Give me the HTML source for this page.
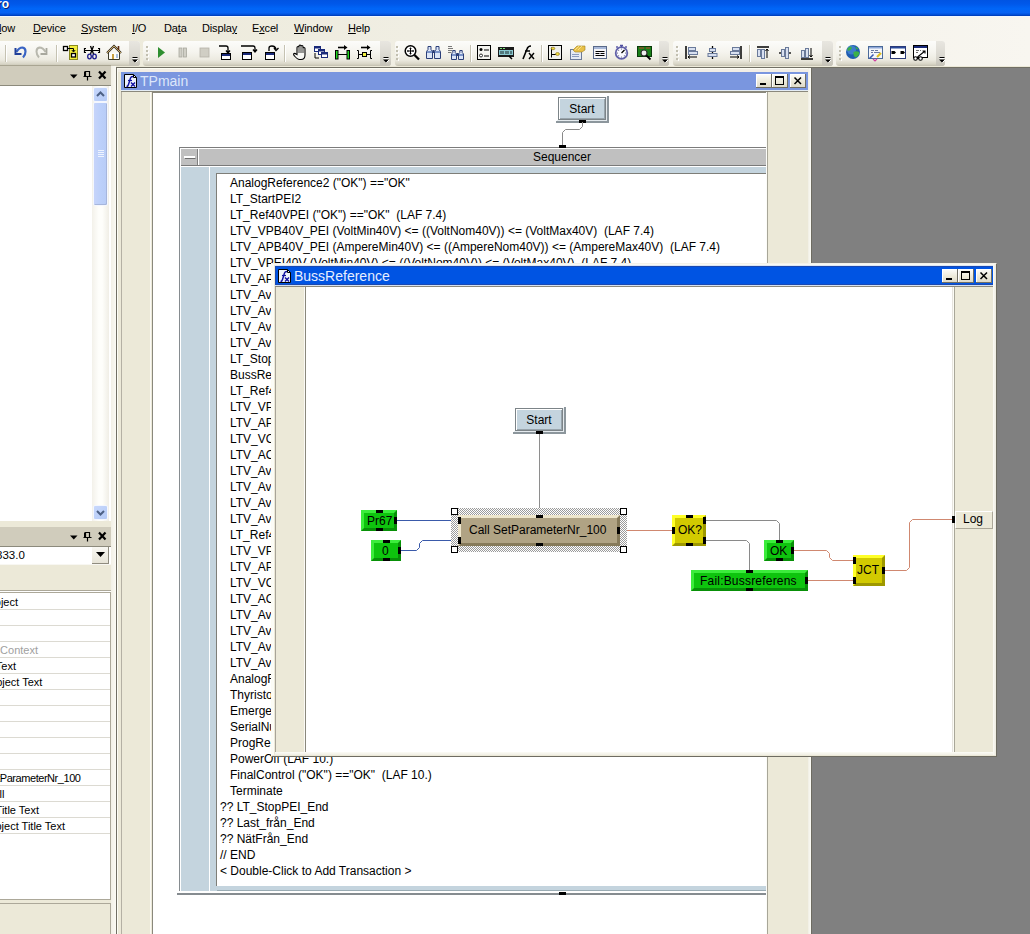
<!DOCTYPE html>
<html><head><meta charset="utf-8">
<style>
*{margin:0;padding:0;box-sizing:border-box}
html,body{width:1030px;height:934px;overflow:hidden;background:#ECE9D8;font-family:"Liberation Sans",sans-serif;color:#000}
.a{position:absolute}
.t{position:absolute;white-space:nowrap;font-size:12px;line-height:14px}
u{text-decoration:underline;text-decoration-thickness:1px;text-underline-offset:0.5px}
.tb{position:absolute;top:41px;height:25px;border-radius:3px;background:linear-gradient(#FCFCFA 0%,#F5F4EE 45%,#ECEAE0 75%,#D8D5C6 92%,#C2BEAE 100%)}
.chev{position:absolute;top:41px;height:25px;width:12px;border-radius:0 3px 3px 0;background:linear-gradient(#E8E6E0,#DAD8D0 60%,#C4C1B6)}
.grip{position:absolute;top:46px;width:2px;height:14px;background:repeating-linear-gradient(#C1BEB0 0 2px,transparent 2px 4px)}
.sep{position:absolute;top:45px;width:2px;height:17px;border-left:1px solid #C5C2B2;border-right:1px solid #fff}
.ic{position:absolute;top:45px;width:16px;height:16px}
.pin{position:absolute;background:#000}
.wb{position:absolute;width:16px;height:14px;border-radius:2px;background:linear-gradient(#FFFFFF,#ECE9D8 60%,#D8D4C4);box-shadow:inset -1px -1px 0 #8F8C7F, inset 1px 1px 0 #fff}
</style></head><body>

<div class="a" style="left:0px;top:0px;width:1030px;height:16px;background:linear-gradient(#0054E3 0%,#0058EA 25%,#0066F8 55%,#0862F2 80%,#004ED6 92%,#0038B0 100%)"></div>
<div class="a" style="left:0px;top:17px;width:1030px;height:49px;background:linear-gradient(90deg,#ECE9D8 0%,#F0EEE3 40%,#F2F0E6 60%,#F8F6F0 100%)"></div>
<div class="t" style="left:-11px;top:-3px;font-weight:bold;font-size:12px;line-height:14px;color:#fff;text-shadow:1px 1px 0 #0A2470">Pro</div>
<div class="a" style="left:0px;top:16px;width:1030px;height:1px;background:#F2F8FF"></div>
<div class="t" style="left:-1px;top:22px;font-size:11px;line-height:13px;letter-spacing:-0.15px"><u>l</u>ow</div>
<div class="t" style="left:33px;top:22px;font-size:11px;line-height:13px;letter-spacing:-0.15px"><u>D</u>evice</div>
<div class="t" style="left:81px;top:22px;font-size:11px;line-height:13px;letter-spacing:-0.15px"><u>S</u>ystem</div>
<div class="t" style="left:132px;top:22px;font-size:11px;line-height:13px;letter-spacing:-0.15px"><u>I</u>/O</div>
<div class="t" style="left:164px;top:22px;font-size:11px;line-height:13px;letter-spacing:-0.15px">Da<u>t</u>a</div>
<div class="t" style="left:202px;top:22px;font-size:11px;line-height:13px;letter-spacing:-0.15px">Displa<u>y</u></div>
<div class="t" style="left:252px;top:22px;font-size:11px;line-height:13px;letter-spacing:-0.15px">E<u>x</u>cel</div>
<div class="t" style="left:294px;top:22px;font-size:11px;line-height:13px;letter-spacing:-0.15px"><u>W</u>indow</div>
<div class="t" style="left:348px;top:22px;font-size:11px;line-height:13px;letter-spacing:-0.15px"><u>H</u>elp</div>
<div class="tb" style="left:-4px;width:144px"></div>
<div class="chev" style="left:129px;width:11px"></div>
<svg class="a" style="left:131px;top:56px" width="8" height="8"><path d="M1.5 2.5H6.5" stroke="#fff" stroke-width="1"/><path d="M1.5 1.5H6.5" stroke="#000" stroke-width="1"/><path d="M1 3.5H7L4 6.5Z" fill="#000"/><path d="M4.5 6.5L7 4" stroke="#fff" stroke-width="1"/></svg>
<div class="tb" style="left:143px;width:248px"></div>
<div class="chev" style="left:380px;width:11px"></div>
<svg class="a" style="left:382px;top:56px" width="8" height="8"><path d="M1.5 2.5H6.5" stroke="#fff" stroke-width="1"/><path d="M1.5 1.5H6.5" stroke="#000" stroke-width="1"/><path d="M1 3.5H7L4 6.5Z" fill="#000"/><path d="M4.5 6.5L7 4" stroke="#fff" stroke-width="1"/></svg>
<div class="tb" style="left:395px;width:274px"></div>
<div class="chev" style="left:659px;width:10px"></div>
<svg class="a" style="left:661px;top:56px" width="8" height="8"><path d="M1.5 2.5H6.5" stroke="#fff" stroke-width="1"/><path d="M1.5 1.5H6.5" stroke="#000" stroke-width="1"/><path d="M1 3.5H7L4 6.5Z" fill="#000"/><path d="M4.5 6.5L7 4" stroke="#fff" stroke-width="1"/></svg>
<div class="tb" style="left:673px;width:160px"></div>
<div class="chev" style="left:822px;width:11px"></div>
<svg class="a" style="left:824px;top:56px" width="8" height="8"><path d="M1.5 2.5H6.5" stroke="#fff" stroke-width="1"/><path d="M1.5 1.5H6.5" stroke="#000" stroke-width="1"/><path d="M1 3.5H7L4 6.5Z" fill="#000"/><path d="M4.5 6.5L7 4" stroke="#fff" stroke-width="1"/></svg>
<div class="tb" style="left:836px;width:109px"></div>
<div class="chev" style="left:936px;width:9px"></div>
<svg class="a" style="left:938px;top:56px" width="8" height="8"><path d="M1.5 2.5H6.5" stroke="#fff" stroke-width="1"/><path d="M1.5 1.5H6.5" stroke="#000" stroke-width="1"/><path d="M1 3.5H7L4 6.5Z" fill="#000"/><path d="M4.5 6.5L7 4" stroke="#fff" stroke-width="1"/></svg>
<svg class="a" style="left:146px;top:45px" width="4" height="17"><g fill="#C2BFB0"><rect x="0" y="1" width="2" height="2"/><rect x="0" y="5" width="2" height="2"/><rect x="0" y="9" width="2" height="2"/><rect x="0" y="13" width="2" height="2"/></g><g fill="#fff"><rect x="2" y="2" width="1" height="2"/><rect x="2" y="6" width="1" height="2"/><rect x="2" y="10" width="1" height="2"/><rect x="2" y="14" width="1" height="2"/></g></svg>
<svg class="a" style="left:396px;top:45px" width="4" height="17"><g fill="#C2BFB0"><rect x="0" y="1" width="2" height="2"/><rect x="0" y="5" width="2" height="2"/><rect x="0" y="9" width="2" height="2"/><rect x="0" y="13" width="2" height="2"/></g><g fill="#fff"><rect x="2" y="2" width="1" height="2"/><rect x="2" y="6" width="1" height="2"/><rect x="2" y="10" width="1" height="2"/><rect x="2" y="14" width="1" height="2"/></g></svg>
<svg class="a" style="left:676px;top:45px" width="4" height="17"><g fill="#C2BFB0"><rect x="0" y="1" width="2" height="2"/><rect x="0" y="5" width="2" height="2"/><rect x="0" y="9" width="2" height="2"/><rect x="0" y="13" width="2" height="2"/></g><g fill="#fff"><rect x="2" y="2" width="1" height="2"/><rect x="2" y="6" width="1" height="2"/><rect x="2" y="10" width="1" height="2"/><rect x="2" y="14" width="1" height="2"/></g></svg>
<svg class="a" style="left:839px;top:45px" width="4" height="17"><g fill="#C2BFB0"><rect x="0" y="1" width="2" height="2"/><rect x="0" y="5" width="2" height="2"/><rect x="0" y="9" width="2" height="2"/><rect x="0" y="13" width="2" height="2"/></g><g fill="#fff"><rect x="2" y="2" width="1" height="2"/><rect x="2" y="6" width="1" height="2"/><rect x="2" y="10" width="1" height="2"/><rect x="2" y="14" width="1" height="2"/></g></svg>
<div class="sep" style="left:5px"></div>
<div class="sep" style="left:56px"></div>
<div class="sep" style="left:284px"></div>
<div class="sep" style="left:470px"></div>
<div class="sep" style="left:541px"></div>
<div class="sep" style="left:749px"></div>
<svg class="a" style="left:0;top:41px" width="1030" height="25">
<g transform="translate(0,-41)">
<!-- undo -->
<path d="M16.5 52Q19 47.5 22.5 47.5Q25.5 48 25.5 51.5Q25.5 55 23 57.5" fill="none" stroke="#3A64C4" stroke-width="2.2"/>
<path d="M15.5 48V54H21.5" fill="none" stroke="#22409A" stroke-width="2"/>
<!-- redo gray -->
<path d="M45.5 52Q43 47.5 39.5 47.5Q36.5 48 36.5 51.5Q36.5 55 39 57.5" fill="none" stroke="#B8B8AE" stroke-width="2"/>
<path d="M46.5 48V54H40.5" fill="none" stroke="#A8A89E" stroke-width="1.8"/>
<!-- icon3 yellow -->
<rect x="69.5" y="45.5" width="8" height="14" fill="#F2EE3C" stroke="#8A8A20"/>
<rect x="63.5" y="46.5" width="4" height="4" fill="#fff" stroke="#000" stroke-width="1.3"/>
<rect x="71.5" y="53.5" width="4" height="3.5" fill="#fff" stroke="#000" stroke-width="1.3"/>
<path d="M68 48.5H73.5V51.5M71.8 50L73.5 52L75.2 50" fill="none" stroke="#000"/>
<!-- icon4 scissors-->
<path d="M85 50.5H99M84.5 48V53M99.5 48V53M84 48.5H86M84 52.5H86M98 48.5H100M98 52.5H100" fill="none" stroke="#000" stroke-width="1.2"/>
<path d="M90.5 46L93.5 54M93.5 46L90.5 54" fill="none" stroke="#000" stroke-width="1.3"/>
<ellipse cx="89.5" cy="56.5" rx="1.8" ry="2.3" fill="none" stroke="#1A1A8A" stroke-width="1.3"/><ellipse cx="94.5" cy="56.5" rx="1.8" ry="2.3" fill="none" stroke="#1A1A8A" stroke-width="1.3"/>
<!-- home -->
<path d="M108.5 52.5V59.5H119.5V52.5" fill="#FDFDF8" stroke="#3A3A2A"/>
<path d="M107 53L114 46L121 53" fill="none" stroke="#3A3020" stroke-width="2.2"/>
<path d="M107 53L114 46L121 53" fill="none" stroke="#D8B870" stroke-width="0.9"/>
<rect x="112" y="54" width="2" height="5" fill="#C8A040"/><rect x="116" y="54" width="2" height="4" fill="#A8C0E0"/>
<path d="M118.5 46V50" stroke="#5A2A10" stroke-width="1.6"/>
<!-- play -->
<path d="M158 47V58L165 52.5Z" fill="#2E8E30"/>
<!-- pause -->
<rect x="179" y="48" width="3" height="9" fill="#D0CFC6" stroke="#A9A89E" stroke-width=".8"/><rect x="183.5" y="48" width="3" height="9" fill="#D0CFC6" stroke="#A9A89E" stroke-width=".8"/>
<!-- stop -->
<rect x="200" y="48" width="9" height="9" fill="#D0CEC4" stroke="#B4B2A8" stroke-width=".8"/>
<!-- step into -->
<path d="M219 46H226Q228 46 228 48V52M226 50.5L228 53L230 50.5" fill="none" stroke="#000" stroke-width="1.3"/>
<rect x="221.5" y="53.5" width="9" height="6" fill="#fff" stroke="#000"/><rect x="222" y="54" width="8" height="2" fill="#1A2A7A"/>
<!-- step over -->
<path d="M241 46H253Q255 46 255 48V51M253 49.5L255 52L257 49.5" fill="none" stroke="#000" stroke-width="1.3"/>
<rect x="242.5" y="52.5" width="9" height="7" fill="#fff" stroke="#000"/><rect x="243" y="53" width="8" height="2" fill="#1A2A7A"/>
<!-- step out -->
<path d="M269 51V48Q269 46 272 46Q275 46 276 49M274 48L276 50.5L278.5 48" fill="none" stroke="#000" stroke-width="1.3"/>
<rect x="265.5" y="52.5" width="9" height="7" fill="#fff" stroke="#000"/><rect x="266" y="53" width="8" height="2" fill="#1A2A7A"/>
<!-- hand -->
<path d="M297 54.5V47.5Q297 46.5 298 46.5Q299 46.5 299 47.5V46Q299 45 300 45Q301 45 301 46V46.5Q301 45.5 302 45.5Q303 45.5 303 46.5V48.5Q303 47.5 304 47.5Q305 47.5 305 48.5V55Q305 59.5 301 59.5H299.5Q297.5 59.5 294.5 56Q293 54.5 294 53.5Q295 53 296 54Z" fill="#F8F8F4" stroke="#000" stroke-width="1.1"/>
<path d="M299 47.5V53M301 46.5V53M303 48.5V53" stroke="#000" stroke-width=".8"/>
<!-- windows -->
<rect x="314.5" y="46.5" width="6" height="5" fill="#fff" stroke="#1A2A7A"/><rect x="318.5" y="49.5" width="6" height="5" fill="#fff" stroke="#1A2A7A"/><rect x="321.5" y="52.5" width="6" height="5" fill="#fff" stroke="#1A2A7A"/>
<rect x="315" y="47" width="5" height="1.5" fill="#1A2A7A"/><rect x="319" y="50" width="5" height="1.5" fill="#1A2A7A"/><rect x="322" y="53" width="5" height="1.5" fill="#1A2A7A"/>
<path d="M315 53V58H319" fill="none" stroke="#000" stroke-width="1"/>
<!-- green brackets -->
<path d="M338 47.5H344.5" stroke="#000" stroke-width="1.6"/><path d="M344 45L347.5 47.5L344 50Z" fill="#000"/>
<rect x="335.5" y="50.5" width="2.5" height="8.5" fill="#20D820" stroke="#000"/><rect x="347" y="50.5" width="2.5" height="8.5" fill="#20D820" stroke="#000"/><path d="M338 54.5H347" stroke="#000"/>
<!-- yellow node -->
<path d="M361 47.5H367.5" stroke="#000" stroke-width="1.6"/><path d="M367 45L370.5 47.5L367 50Z" fill="#000"/>
<path d="M357 50.5H358.5V58.5H357M372 50.5H370.5V58.5H372M358.5 54.5H370.5" fill="none" stroke="#000"/>
<rect x="362.5" y="52.5" width="4" height="4" fill="#F0F040" stroke="#000"/>
<!-- zoom -->
<circle cx="410.5" cy="51" r="5.3" fill="#fff" stroke="#000" stroke-width="1.5"/>
<path d="M414.5 55L419 59.5" stroke="#000" stroke-width="2.3"/>
<path d="M410.5 47.5V54.5M407 51H414" stroke="#000" stroke-width="1"/>
<path d="M409.5 48.5H411.5M409.5 53.5H411.5M408 50V52M413 50V52" stroke="#000" stroke-width=".8"/>
<!-- binoculars -->
<path d="M426.5 58.5V51.5L428 49.5V46.5H431V49.5L432.5 51.5V58.5ZM434.5 58.5V51.5L436 49.5V46.5H439V49.5L440.5 51.5V58.5Z" fill="#DCE6F8" stroke="#2A3E78" stroke-width="1"/>
<path d="M427 52H432M435 52H440" stroke="#5A78B8" stroke-width="1.6"/>
<rect x="432.5" y="50" width="2" height="3" fill="#2A3E78"/>
<!-- find next -->
<path d="M448 46.5H452M448 48.5H453M448 50.5H452.5M448 52.5H451.5" stroke="#7A7A7A" stroke-width="1"/>
<path d="M451.5 59.5V54L452.8 52.5V50.5H455.2V52.5L456.5 54V59.5ZM458.5 59.5V54L459.8 52.5V50.5H462.2V52.5L463.5 54V59.5Z" fill="#DCE6F8" stroke="#2A3E78" stroke-width="1"/>
<path d="M452 55H456M459 55H463" stroke="#5A78B8" stroke-width="1.4"/>
<rect x="456.5" y="53" width="2" height="3" fill="#2A3E78"/>
<!-- list -->
<rect x="477.5" y="45.5" width="13" height="14" fill="#F4F4F0" stroke="#000"/>
<circle cx="481" cy="49.5" r="1.5" fill="#000"/><circle cx="481" cy="55.5" r="1.5" fill="#fff" stroke="#000" stroke-width=".8"/>
<path d="M484 50H489M484 56H489" stroke="#000"/>
<!-- display -->
<rect x="498" y="47" width="16" height="10" fill="#1A1A1A"/><rect x="499" y="50" width="14" height="5" fill="#8AC8D0"/>
<path d="M500 48.5H502M503 48.5H505" stroke="#7CE07C"/>
<path d="M501 51V54M503 51V54M506 51V54M508 51V54M511 51V54" stroke="#000" stroke-width=".8"/>
<path d="M509 56L512 59" stroke="#000" stroke-width="1.5"/>
<!-- fx -->
<path d="M523 59L527 49Q528 46 531 46M525 51H530" fill="none" stroke="#000" stroke-width="1.6"/>
<path d="M529 53L534 59M534 53L529 59" stroke="#000" stroke-width="1.4"/>
<!-- flag -->
<rect x="548.5" y="45.5" width="13" height="14" fill="#F0F0EC" stroke="#000"/>
<path d="M551.5 47.5V57.5M551.5 54.5H556" stroke="#000" stroke-width="1"/>
<ellipse cx="553" cy="48.5" rx="1.8" ry="1.3" fill="#F0E040" stroke="#806010" stroke-width=".6"/>
<ellipse cx="557.5" cy="54" rx="2" ry="1.4" fill="#F0E040" stroke="#806010" stroke-width=".6"/>
<!-- notes -->
<rect x="570.5" y="49.5" width="11" height="10" fill="#E4EAF4" stroke="#6A7A9A"/>
<path d="M572 54.5H579M572 56.5H579" stroke="#8A9CC0" stroke-width="1"/>
<path d="M573 50L577 46H585V50L582 52H575Z" fill="#E8C048" stroke="#A08020" stroke-width=".6"/>
<path d="M575 50L579 46M578 50L582 46" stroke="#F8E8A0" stroke-width=".8"/>
<!-- form -->
<rect x="593.5" y="46.5" width="13" height="12" fill="#F4F4F8" stroke="#5A6A8A"/><rect x="594" y="47" width="12" height="2" fill="#A8B8D8"/>
<path d="M595.5 51.5H604.5M595.5 53.5H599.5M600.5 53.5H604.5M595.5 55.5H604.5" stroke="#000" stroke-width="1"/>
<!-- stopwatch -->
<circle cx="621.5" cy="53" r="5.8" fill="#FAFAFF" stroke="#6060A8" stroke-width="1.8"/>
<path d="M620 45.5H623M621.5 45.5V47" stroke="#5050A0" stroke-width="1.4"/>
<circle cx="617" cy="47" r="1" fill="#6060A8"/><circle cx="626" cy="47" r="1" fill="#6060A8"/>
<path d="M621.5 53L624.5 50" stroke="#000" stroke-width="1.2"/>
<g fill="#404060"><circle cx="621.5" cy="49" r=".5"/><circle cx="621.5" cy="57" r=".5"/><circle cx="617.5" cy="53" r=".5"/><circle cx="625.5" cy="53" r=".5"/><circle cx="618.7" cy="50.2" r=".5"/><circle cx="618.7" cy="55.8" r=".5"/><circle cx="624.3" cy="55.8" r=".5"/></g>
<!-- green magnifier -->
<rect x="637.5" y="46.5" width="14" height="10" fill="#188018" stroke="#0A3A0A"/>
<path d="M639 48H644M646 48H650" stroke="#C04030" stroke-width="1"/>
<circle cx="644" cy="53" r="3" fill="#F0F0F0" stroke="#303030" stroke-width="1.2"/>
<path d="M646.3 55.3L650.5 59.5" stroke="#000" stroke-width="1.8"/>
<!-- align left -->
<path d="M686 46V59" stroke="#000" stroke-width="1.5"/>
<rect x="688.5" y="47.5" width="7" height="3" fill="#D8E0F0" stroke="#6A7A9A"/><rect x="688.5" y="51.5" width="9" height="3" fill="#D8E0F0" stroke="#6A7A9A"/>
<path d="M688 57H697M690 55.5L688 57L690 58.5" fill="none" stroke="#000"/>
<!-- align center -->
<path d="M712.5 46V59" stroke="#000" stroke-width="1.3"/>
<rect x="709.5" y="48.5" width="6" height="3" fill="#D8E0F0" stroke="#6A7A9A"/><rect x="708" y="53.5" width="9" height="3" fill="#D8E0F0" stroke="#6A7A9A"/>
<!-- align right -->
<path d="M741 46V59" stroke="#000" stroke-width="1.5"/>
<rect x="732.5" y="47.5" width="7" height="3" fill="#D8E0F0" stroke="#6A7A9A"/><rect x="730.5" y="51.5" width="9" height="3" fill="#D8E0F0" stroke="#6A7A9A"/>
<path d="M730 57H739M737 55.5L739 57L737 58.5" fill="none" stroke="#000"/>
<!-- align top -->
<path d="M757 47H769" stroke="#000" stroke-width="1.5"/>
<rect x="757.5" y="49.5" width="3" height="7" fill="#D8E0F0" stroke="#6A7A9A"/><rect x="761.5" y="49.5" width="3" height="9" fill="#D8E0F0" stroke="#6A7A9A"/>
<path d="M767 58V49M765.5 51L767 49L768.5 51" fill="none" stroke="#000"/>
<!-- align middle -->
<path d="M779 53H791" stroke="#000" stroke-width="1.3"/>
<rect x="781.5" y="49.5" width="3" height="7" fill="#D8E0F0" stroke="#6A7A9A"/><rect x="785.5" y="47.5" width="3" height="11" fill="#D8E0F0" stroke="#6A7A9A"/>
<!-- align bottom -->
<path d="M801 59H813" stroke="#000" stroke-width="1.5"/>
<rect x="801.5" y="50.5" width="3" height="7" fill="#D8E0F0" stroke="#6A7A9A"/><rect x="805.5" y="48.5" width="3" height="9" fill="#D8E0F0" stroke="#6A7A9A"/>
<path d="M811 48V57M809.5 55L811 57L812.5 55" fill="none" stroke="#000"/>
<!-- globe -->
<circle cx="853" cy="52" r="7" fill="#1E5CB0"/>
<circle cx="851.5" cy="50" r="4.5" fill="#4A8AD8" opacity=".7"/>
<path d="M847.5 48.5Q849 46.5 851.5 46.5Q852.5 48.5 850.5 50Q849 51 847.5 50.5Z" fill="#3CB048"/>
<path d="M853.5 52Q857 50.5 859.5 52.5Q859 56 855.5 57.5Q853 56 853.5 52Z" fill="#3CB048"/>
<path d="M855 46.5Q857.5 47 858.5 49L856.5 49.5Z" fill="#3CB048"/>
<!-- icon form pen -->
<rect x="868.5" y="46.5" width="14" height="12" fill="#F4F6FA" stroke="#4A6A9A"/><rect x="869" y="47" width="13" height="1.5" fill="#90A8D8"/>
<path d="M871 50.5H874M875 50.5H878M871 52.5H873M874 52.5H880" stroke="#6A7AA0" stroke-width="1"/>
<path d="M869.5 58.5L873.5 54.5" stroke="#3A5AB0" stroke-width="1.6"/>
<path d="M873 59L875 61L877 59" fill="none" stroke="#D040A0" stroke-width="1.2"/>
<path d="M877 57L881 53" stroke="#E0C020" stroke-width="2.2"/>
<!-- icon connector -->
<rect x="890.5" y="46.5" width="15" height="12" fill="#fff" stroke="#2A3A7A"/><rect x="891" y="47" width="14" height="1.5" fill="#2A4A9A"/>
<path d="M891.5 51H894.5L896 52.5L894.5 54H891.5Z" fill="#000"/><path d="M900.5 51H903.5L905 52.5L903.5 54H900.5Z" fill="#000"/>
<!-- icon chart -->
<rect x="913.5" y="45.5" width="14" height="12" fill="#fff" stroke="#000"/><rect x="914" y="46" width="13" height="2" fill="#1A2A7A"/>
<path d="M916 50.5H919M920 50.5H921M916 52.5H918" stroke="#5A5A5A" stroke-width=".9"/>
<path d="M917.5 57L925 51M922.5 51H925V53.5" fill="none" stroke="#000" stroke-width="1.1"/>
<circle cx="915.5" cy="58.5" r="1.8" fill="#fff" stroke="#000" stroke-width="1.1"/><circle cx="920.5" cy="58.5" r="1.8" fill="#fff" stroke="#000" stroke-width="1.1"/><path d="M917 58.5H919" stroke="#000"/>
</g></svg>
<div class="a" style="left:0px;top:65px;width:111px;height:1px;background:#A9A592"></div>
<div class="a" style="left:0px;top:66px;width:111px;height:19px;background:#D0CCBC"></div>
<div class="a" style="left:0px;top:85px;width:111px;height:1px;background:#8C8A7C"></div>
<div class="a" style="left:0px;top:86px;width:111px;height:435px;background:#fff"></div>
<div class="a" style="left:92px;top:86px;width:17px;height:435px;background:linear-gradient(90deg,#F3F1EA,#FEFEFB 40%,#FEFEFB 60%,#F0EEE6)"></div>
<div class="a" style="left:93px;top:87px;width:15px;height:15px;border-radius:2px;background:linear-gradient(135deg,#C8D8FC,#B4CAF6);border:1px solid #F4F7FE;box-shadow:0 0 0 0 #000"></div>
<div class="a" style="left:93px;top:102px;width:15px;height:104px;border-radius:2px;background:linear-gradient(90deg,#C6D4FA,#BCD0FA 50%,#B8CCF6);border:1px solid #F4F7FE;box-shadow:inset -1px -1px 0 #A6B6DC"></div>
<div class="a" style="left:93px;top:505px;width:15px;height:15px;border-radius:2px;background:linear-gradient(135deg,#C8D8FC,#B4CAF6);border:1px solid #F4F7FE"></div>
<svg class="a" style="left:93px;top:87px" width="15" height="15"><path d="M4 9 L7.5 5.5 L11 9" stroke="#4D6185" stroke-width="2" fill="none"/></svg>
<svg class="a" style="left:93px;top:505px" width="15" height="15"><path d="M4 6 L7.5 9.5 L11 6" stroke="#4D6185" stroke-width="2" fill="none"/></svg>
<svg class="a" style="left:98px;top:150px" width="6" height="8"><path d="M0 .5H6M0 2.5H6M0 4.5H6M0 6.5H6" stroke="#EEF3FE" stroke-width="1"/></svg>
<div class="a" style="left:0px;top:521px;width:111px;height:6px;background:#ECE9D8"></div>
<div class="a" style="left:0px;top:527px;width:111px;height:19px;background:#D0CCBC"></div>
<div class="a" style="left:0px;top:546px;width:111px;height:1px;background:#8C8A7C"></div>
<div class="a" style="left:0px;top:547px;width:111px;height:17px;background:#fff"></div>
<div class="a" style="left:92px;top:547px;width:17px;height:17px;background:linear-gradient(#F8F7F2,#E6E3D6);box-shadow:inset -1px -1px 0 #8F8C7F"></div>
<svg class="a" style="left:96px;top:552px" width="9" height="6"><path d="M0 0H9L4.5 5Z" fill="#000"/></svg>
<div class="a" style="left:0px;top:564px;width:111px;height:1px;background:#F8F7F2"></div>
<div class="t" style="left:-4px;top:549px;font-size:11.5px;line-height:13px">333.0</div>
<svg class="a" style="left:68px;top:66px" width="42" height="19"><path d="M2 8.5H9.5L5.75 12.5Z" fill="#000"/><path d="M17 5.5H22M17.5 5V11M21.5 5V11M15.5 10.5H23.5M19.5 10.5V14.5" stroke="#000" stroke-width="1.2" fill="none"/><path d="M16.5 5.5V10.5" stroke="#000" stroke-width="1"/><path d="M31 5.5L37.5 12.5M37.5 5.5L31 12.5" stroke="#000" stroke-width="2.2"/></svg>
<svg class="a" style="left:68px;top:527px" width="42" height="19"><path d="M2 8.5H9.5L5.75 12.5Z" fill="#000"/><path d="M17 5.5H22M17.5 5V11M21.5 5V11M15.5 10.5H23.5M19.5 10.5V14.5" stroke="#000" stroke-width="1.2" fill="none"/><path d="M16.5 5.5V10.5" stroke="#000" stroke-width="1"/><path d="M31 5.5L37.5 12.5M37.5 5.5L31 12.5" stroke="#000" stroke-width="2.2"/></svg>
<div class="a" style="left:0px;top:590px;width:111px;height:1px;background:#ACA899"></div>
<div class="a" style="left:0px;top:591px;width:111px;height:1px;background:#FFFFFF"></div>
<div class="a" style="left:0px;top:592px;width:111px;height:308px;background:#fff;border-top:1px solid #ACA899;border-right:1px solid #ACA899;border-bottom:1px solid #ACA899"></div>
<div class="a" style="left:0px;top:609px;width:110px;height:1px;background:#DCDAD2"></div>
<div class="a" style="left:0px;top:625px;width:110px;height:1px;background:#DCDAD2"></div>
<div class="a" style="left:0px;top:641px;width:110px;height:1px;background:#DCDAD2"></div>
<div class="a" style="left:0px;top:657px;width:110px;height:1px;background:#DCDAD2"></div>
<div class="a" style="left:0px;top:673px;width:110px;height:1px;background:#DCDAD2"></div>
<div class="a" style="left:0px;top:689px;width:110px;height:1px;background:#DCDAD2"></div>
<div class="a" style="left:0px;top:705px;width:110px;height:1px;background:#DCDAD2"></div>
<div class="a" style="left:0px;top:721px;width:110px;height:1px;background:#DCDAD2"></div>
<div class="a" style="left:0px;top:737px;width:110px;height:1px;background:#DCDAD2"></div>
<div class="a" style="left:0px;top:753px;width:110px;height:1px;background:#DCDAD2"></div>
<div class="a" style="left:0px;top:769px;width:110px;height:1px;background:#DCDAD2"></div>
<div class="a" style="left:0px;top:785px;width:110px;height:1px;background:#DCDAD2"></div>
<div class="a" style="left:0px;top:801px;width:110px;height:1px;background:#DCDAD2"></div>
<div class="a" style="left:0px;top:817px;width:110px;height:1px;background:#DCDAD2"></div>
<div class="a" style="left:0px;top:833px;width:110px;height:1px;background:#DCDAD2"></div>
<div class="t" style="right:1012px;top:596px;font-size:11px;line-height:13px;letter-spacing:0">Object</div>
<div class="t" style="right:992px;top:644px;font-size:11px;line-height:13px;letter-spacing:0"><span style="color:#A0A0A0">Global Context</span></div>
<div class="t" style="right:1014px;top:660px;font-size:11px;line-height:13px;letter-spacing:0">Title Text</div>
<div class="t" style="right:987.6px;top:676px;font-size:11px;line-height:13px;letter-spacing:0">Object Text</div>
<div class="t" style="right:949.5px;top:772px;font-size:11px;line-height:13px;letter-spacing:-0.45px">SetParameterNr_100</div>
<div class="t" style="right:1025.5px;top:788px;font-size:11px;line-height:13px;letter-spacing:0">Call</div>
<div class="t" style="right:991px;top:804px;font-size:11px;line-height:13px;letter-spacing:0">Title Text</div>
<div class="t" style="right:965px;top:820px;font-size:11px;line-height:13px;letter-spacing:0">Object Title Text</div>
<div class="a" style="left:0px;top:903px;width:111px;height:31px;border-top:1px solid #ACA899;border-right:1px solid #ACA899"></div>
<div class="a" style="left:111px;top:66px;width:5px;height:868px;background:linear-gradient(90deg,#F2F0E6,#FBFAF4)"></div>
<div class="a" style="left:116px;top:67px;width:914px;height:867px;background:#808080;border-left:1px solid #716F64;border-top:1px solid #716F64"></div>
<div class="a" style="left:117px;top:68px;width:694px;height:866px;background:#ECE9D8;border-left:1px solid #FCFCF4;border-top:1px solid #FCFCF4"></div>
<div class="a" style="left:118px;top:69px;width:692px;height:3px;background:#F2EEE6"></div>
<div class="a" style="left:121px;top:72px;width:687px;height:18px;background:#7A96DF"></div>
<div class="a" style="left:121px;top:90px;width:687px;height:1px;background:#E4ECF4"></div>
<div class="a" style="left:121px;top:91px;width:687px;height:1px;background:#8A887C"></div>
<div class="a" style="left:121px;top:92px;width:1px;height:842px;background:#B4B0A4"></div>
<div class="a" style="left:150px;top:92px;width:1px;height:842px;background:#FBFAF5"></div>
<div class="a" style="left:152px;top:92px;width:614px;height:842px;background:#fff;border-left:1px solid #8A887C;border-top:1px solid #8A887C"></div>
<div class="a" style="left:766px;top:92px;width:1px;height:842px;background:#FCFCF8"></div>
<div class="a" style="left:767px;top:92px;width:1px;height:842px;background:#A8A698"></div>
<div class="a" style="left:808px;top:68px;width:3px;height:866px;background:linear-gradient(90deg,#F0EEE4,#FCFCF6)"></div>
<div class="a" style="left:811px;top:68px;width:1px;height:866px;background:#6E6C62"></div>
<svg class="a" style="left:124px;top:74px" width="13" height="14"><path d="M.5 .5H9.5L12.5 3.5V13.5H.5Z" fill="#EEF2FC" stroke="#000"/><path d="M9.5 .5V3.5H12.5" fill="none" stroke="#000"/><path d="M2.5 12.5Q4 12.5 4.5 10.5L6.5 4Q7 2.5 9 2.5" stroke="#1010A0" stroke-width="1.4" fill="none"/><path d="M4 6.5H8" stroke="#1010A0" stroke-width="1.2"/><path d="M7 8.5L11 12.5M11 8.5L7 12.5" stroke="#1010A0" stroke-width="1.4"/></svg>
<div class="t" style="left:140px;top:73px;font-size:14px;line-height:16px;color:#DCE6FA">TPmain</div>
<div class="a" style="left:756px;top:74px;width:16px;height:14px;background:linear-gradient(#FDFDFB,#ECE9D8 55%,#DCD8C8);box-shadow:inset -1px -1px 0 #716F64,inset 1px 1px 0 #fff"><svg width="16" height="14"><path d="M4 10H10" stroke="#000" stroke-width="2"/></svg></div>
<div class="a" style="left:772px;top:74px;width:16px;height:14px;background:linear-gradient(#FDFDFB,#ECE9D8 55%,#DCD8C8);box-shadow:inset -1px -1px 0 #716F64,inset 1px 1px 0 #fff"><svg width="16" height="14"><rect x="3.5" y="2.5" width="8" height="8" fill="none" stroke="#000" stroke-width="1"/><path d="M3 3H12" stroke="#000" stroke-width="2"/></svg></div>
<div class="a" style="left:790px;top:74px;width:16px;height:14px;background:linear-gradient(#FDFDFB,#ECE9D8 55%,#DCD8C8);box-shadow:inset -1px -1px 0 #716F64,inset 1px 1px 0 #fff"><svg width="16" height="14"><path d="M4.5 3.5L11 10M11 3.5L4.5 10" stroke="#000" stroke-width="1.5"/></svg></div>
<div class="a" style="left:0;top:0;width:1030px;height:934px;clip-path:inset(93px 264px 0 153px)">
<div class="a" style="left:556px;top:121px;width:51px;height:2px;background:#8C969C"></div><div class="a" style="left:607px;top:96px;width:2px;height:27px;background:#8C969C"></div><div class="a" style="left:557px;top:120px;width:50px;height:1px;background:#E4EAEE"></div><div class="a" style="left:606px;top:97px;width:1px;height:24px;background:#E4EAEE"></div><div class="a" style="left:558px;top:97px;width:48px;height:23px;background:#C4D4DE;border:1px solid #7C8488;box-shadow:inset 1px 1px 0 #fff,inset -1px -1px 0 #98A4AC"></div><div class="t" style="left:558px;top:102px;width:48px;text-align:center">Start</div><div class="pin" style="left:579px;top:120px;width:7px;height:3px"></div>
<svg class="a" style="left:0;top:0" width="1030" height="150"><path d="M582.5 122V126.5L579.5 129.5H565.5L562.5 132.5V145" stroke="#8A8A8A" stroke-width="1" fill="none"/></svg>
<div class="a" style="left:179px;top:147px;width:600px;height:744px;background:#C4D4DE;border-left:1px solid #868C90;border-top:1px solid #7C7C7C"></div>
<div class="a" style="left:180px;top:148px;width:600px;height:1px;background:#fff"></div>
<div class="a" style="left:180px;top:148px;width:1px;height:744px;background:#fff"></div>
<div class="a" style="left:181px;top:149px;width:600px;height:16px;background:#C0C0C0"></div>
<div class="a" style="left:197px;top:149px;width:1px;height:16px;background:#808080"></div>
<div class="a" style="left:198px;top:149px;width:1px;height:16px;background:#fff"></div>
<div class="a" style="left:181px;top:165px;width:600px;height:1px;background:#7A7A7A"></div>
<div class="a" style="left:181px;top:166px;width:600px;height:1px;background:#fff"></div>
<div class="a" style="left:177px;top:891px;width:604px;height:2px;background:#fff"></div>
<div class="a" style="left:177px;top:893px;width:604px;height:2px;background:#868C90"></div>
<div class="a" style="left:209px;top:166px;width:1px;height:726px;background:#fff"></div>
<div class="a" style="left:216px;top:173px;width:560px;height:713px;background:#fff;border-left:1px solid #7E7E78;border-top:1px solid #7E7E78"></div>
<div class="a" style="left:217px;top:890px;width:560px;height:1px;background:#9AACB4"></div>
<svg class="a" style="left:184px;top:152px" width="12" height="8"><path d="M0 5H11" stroke="#fff" stroke-width="2"/><path d="M1 6.5H11.5" stroke="#6E6E6E" stroke-width="1"/></svg>
<div class="t" style="left:533px;top:150px;font-size:12px;line-height:14px">Sequencer</div>
<div class="a" style="left:559px;top:145px;width:7px;height:3px;background:#000"></div>
<div class="a" style="left:559px;top:892px;width:7px;height:3px;background:#000"></div>
<div class="t" style="left:230px;top:176px;">AnalogReference2 ("OK") =="OK"</div>
<div class="t" style="left:230px;top:192px;">LT_StartPEI2</div>
<div class="t" style="left:230px;top:208px;">LT_Ref40VPEI ("OK") =="OK"&nbsp; (LAF 7.4)</div>
<div class="t" style="left:230px;top:224px;">LTV_VPB40V_PEI (VoltMin40V) &lt;= ((VoltNom40V)) &lt;= (VoltMax40V)&nbsp; (LAF 7.4)</div>
<div class="t" style="left:230px;top:240px;">LTV_APB40V_PEI (AmpereMin40V) &lt;= ((AmpereNom40V)) &lt;= (AmpereMax40V)&nbsp; (LAF 7.4)</div>
<div class="t" style="left:230px;top:256px;">LTV_VPEI40V (VoltMin40V) &lt;= ((VoltNom40V)) &lt;= (VoltMax40V)&nbsp; (LAF 7.4)</div>
<div class="t" style="left:230px;top:272px;">LTV_APEI40V</div>
<div class="t" style="left:230px;top:288px;">LTV_AvPEI1</div>
<div class="t" style="left:230px;top:304px;">LTV_AvPEI2</div>
<div class="t" style="left:230px;top:320px;">LTV_AvPEI3</div>
<div class="t" style="left:230px;top:336px;">LTV_AvPEI4</div>
<div class="t" style="left:230px;top:352px;">LT_StopPEI2</div>
<div class="t" style="left:230px;top:368px;">BussReference</div>
<div class="t" style="left:230px;top:384px;">LT_Ref40V2</div>
<div class="t" style="left:230px;top:400px;">LTV_VPB40V</div>
<div class="t" style="left:230px;top:416px;">LTV_APB40V</div>
<div class="t" style="left:230px;top:432px;">LTV_VOut40V</div>
<div class="t" style="left:230px;top:448px;">LTV_AOut40V</div>
<div class="t" style="left:230px;top:464px;">LTV_Av1</div>
<div class="t" style="left:230px;top:480px;">LTV_Av2</div>
<div class="t" style="left:230px;top:496px;">LTV_Av3</div>
<div class="t" style="left:230px;top:512px;">LTV_Av4</div>
<div class="t" style="left:230px;top:528px;">LT_Ref40V3</div>
<div class="t" style="left:230px;top:544px;">LTV_VPB40V</div>
<div class="t" style="left:230px;top:560px;">LTV_APB40V</div>
<div class="t" style="left:230px;top:576px;">LTV_VOut40V</div>
<div class="t" style="left:230px;top:592px;">LTV_AOut40V</div>
<div class="t" style="left:230px;top:608px;">LTV_Av1</div>
<div class="t" style="left:230px;top:624px;">LTV_Av2</div>
<div class="t" style="left:230px;top:640px;">LTV_Av3</div>
<div class="t" style="left:230px;top:656px;">LTV_Av4</div>
<div class="t" style="left:230px;top:672px;">AnalogReference3</div>
<div class="t" style="left:230px;top:688px;">ThyristorControl</div>
<div class="t" style="left:230px;top:704px;">EmergencyStop</div>
<div class="t" style="left:230px;top:720px;">SerialNumber</div>
<div class="t" style="left:230px;top:736px;">ProgRelease</div>
<div class="t" style="left:230px;top:752px;">PowerOff (LAF 10.)</div>
<div class="t" style="left:230px;top:768px;">FinalControl ("OK") =="OK"&nbsp; (LAF 10.)</div>
<div class="t" style="left:230px;top:784px;">Terminate</div>
<div class="t" style="left:220px;top:800px;">?? LT_StopPEI_End</div>
<div class="t" style="left:220px;top:816px;">?? Last_från_End</div>
<div class="t" style="left:220px;top:832px;">?? NätFrån_End</div>
<div class="t" style="left:220px;top:848px;">// END</div>
<div class="t" style="left:220px;top:864px;">&lt; Double-Click to Add Transaction &gt;</div>
</div>
<div class="a" style="left:271px;top:263px;width:726px;height:494px;background:#ECE9D8;border-left:1px solid #FCFCF4;border-top:1px solid #F4F2EA;border-right:1px solid #6E6C62;border-bottom:1px solid #6E6C62"></div>
<div class="a" style="left:272px;top:264px;width:723px;height:1px;background:#FAF9F2"></div>
<div class="a" style="left:272px;top:264px;width:2px;height:491px;background:#FCFCF6"></div>
<div class="a" style="left:275px;top:265px;width:719px;height:1px;background:#DCE6F4"></div>
<div class="a" style="left:275px;top:266px;width:719px;height:19px;background:#0054E3;border:1px solid #1A48B0"></div>
<div class="a" style="left:275px;top:285px;width:719px;height:1px;background:#D4E0F0"></div>
<div class="a" style="left:275px;top:286px;width:719px;height:1px;background:#8A887C"></div>
<div class="a" style="left:275px;top:287px;width:1px;height:465px;background:#A8A498"></div>
<div class="a" style="left:304px;top:287px;width:1px;height:465px;background:#FBFAF5"></div>
<div class="a" style="left:305px;top:287px;width:647px;height:465px;background:#fff;border-left:1px solid #8A887C"></div>
<div class="a" style="left:952px;top:287px;width:1px;height:465px;background:#E6E4DE"></div>
<div class="a" style="left:953px;top:287px;width:1px;height:465px;background:#FCFCF6"></div>
<div class="a" style="left:954px;top:287px;width:1px;height:465px;background:#A8A698"></div>
<div class="a" style="left:275px;top:752px;width:719px;height:3px;background:linear-gradient(#FCFCF6,#F0EEE4)"></div>
<div class="a" style="left:993px;top:264px;width:3px;height:491px;background:linear-gradient(90deg,#FCFCF6,#ECEAE0)"></div>
<svg class="a" style="left:278px;top:269px" width="13" height="14"><path d="M.5 .5H9.5L12.5 3.5V13.5H.5Z" fill="#EEF2FC" stroke="#000"/><path d="M9.5 .5V3.5H12.5" fill="none" stroke="#000"/><path d="M2.5 12.5Q4 12.5 4.5 10.5L6.5 4Q7 2.5 9 2.5" stroke="#1010A0" stroke-width="1.4" fill="none"/><path d="M4 6.5H8" stroke="#1010A0" stroke-width="1.2"/><path d="M7 8.5L11 12.5M11 8.5L7 12.5" stroke="#1010A0" stroke-width="1.4"/></svg>
<div class="t" style="left:294px;top:268px;font-size:14px;line-height:16px;color:#E6EEFF">BussReference</div>
<div class="a" style="left:942px;top:269px;width:16px;height:14px;background:linear-gradient(#FDFDFB,#ECE9D8 55%,#DCD8C8);box-shadow:inset -1px -1px 0 #716F64,inset 1px 1px 0 #fff"><svg width="16" height="14"><path d="M4 10H10" stroke="#000" stroke-width="2"/></svg></div>
<div class="a" style="left:958px;top:269px;width:16px;height:14px;background:linear-gradient(#FDFDFB,#ECE9D8 55%,#DCD8C8);box-shadow:inset -1px -1px 0 #716F64,inset 1px 1px 0 #fff"><svg width="16" height="14"><rect x="3.5" y="2.5" width="8" height="8" fill="none" stroke="#000" stroke-width="1"/><path d="M3 3H12" stroke="#000" stroke-width="2"/></svg></div>
<div class="a" style="left:976px;top:269px;width:16px;height:14px;background:linear-gradient(#FDFDFB,#ECE9D8 55%,#DCD8C8);box-shadow:inset -1px -1px 0 #716F64,inset 1px 1px 0 #fff"><svg width="16" height="14"><path d="M4.5 3.5L11 10M11 3.5L4.5 10" stroke="#000" stroke-width="1.5"/></svg></div>
<svg class="a" style="left:0;top:0" width="1030" height="934">
<g fill="none" stroke-width="1">
<path d="M539.5 434V515" stroke="#8E8E8E"/>
<path d="M397 520.5H451" stroke="#3A5AAA"/>
<path d="M401 550.5H416.5L419.5 547.5V543.5L422.5 540.5H451" stroke="#3A5AAA"/>
<path d="M627 530.5H672" stroke="#D08870"/>
<path d="M706 520.5H776.5L779.5 523.5V540" stroke="#8A8A8A"/>
<path d="M706 540.5H746.5L749.5 543.5V570" stroke="#8A8A8A"/>
<path d="M794 550.5H826.5L829.5 553.5V557.5L832.5 560.5H853" stroke="#D08870"/>
<path d="M808 580.5H853" stroke="#D08870"/>
<path d="M885 570.5H906.5L909.5 567.5V522.5L912.5 519.5H952" stroke="#D08870"/>
</g></svg>
<div class="a" style="left:513px;top:432px;width:51px;height:2px;background:#8C969C"></div><div class="a" style="left:564px;top:407px;width:2px;height:27px;background:#8C969C"></div><div class="a" style="left:514px;top:431px;width:50px;height:1px;background:#E4EAEE"></div><div class="a" style="left:563px;top:408px;width:1px;height:24px;background:#E4EAEE"></div><div class="a" style="left:515px;top:408px;width:48px;height:23px;background:#C4D4DE;border:1px solid #7C8488;box-shadow:inset 1px 1px 0 #fff,inset -1px -1px 0 #98A4AC"></div><div class="t" style="left:515px;top:413px;width:48px;text-align:center">Start</div><div class="pin" style="left:536px;top:431px;width:7px;height:3px"></div>
<div class="a" style="left:451px;top:508px;width:176px;height:44px;background:repeating-conic-gradient(#9A9A9A 0 25%,#FFFFFF 0 50%) 0 0/2px 2px"></div>
<div class="a" style="left:458px;top:515px;width:162px;height:31px;background:#B0A384;border-style:solid;border-width:3px;border-color:#EEE6CC #867A5A #867A5A #EEE6CC"></div><div class="t" style="left:469px;top:523px">Call SetParameterNr_100</div><div class="pin" style="left:458px;top:517px;width:3px;height:7px"></div><div class="pin" style="left:458px;top:537px;width:3px;height:7px"></div><div class="pin" style="left:536px;top:515px;width:7px;height:3px"></div><div class="pin" style="left:536px;top:543px;width:7px;height:3px"></div><div class="pin" style="left:617px;top:527px;width:3px;height:7px"></div>
<div class="a" style="left:451px;top:508px;width:7px;height:7px;background:#fff;border:1px solid #000"></div>
<div class="a" style="left:620px;top:508px;width:7px;height:7px;background:#fff;border:1px solid #000"></div>
<div class="a" style="left:451px;top:546px;width:7px;height:7px;background:#fff;border:1px solid #000"></div>
<div class="a" style="left:620px;top:546px;width:7px;height:7px;background:#fff;border:1px solid #000"></div>
<div class="a" style="left:361px;top:510px;width:36px;height:21px;background:#0EC40E;border-style:solid;border-width:3px;border-color:#3CEC3C #089008 #089008 #3CEC3C"></div><div class="t" style="left:367px;top:514px">Pr67</div><div class="pin" style="left:376px;top:510px;width:7px;height:3px"></div><div class="pin" style="left:376px;top:528px;width:7px;height:3px"></div><div class="pin" style="left:394px;top:517px;width:3px;height:7px"></div>
<div class="a" style="left:371px;top:540px;width:30px;height:21px;background:#0EC40E;border-style:solid;border-width:3px;border-color:#3CEC3C #089008 #089008 #3CEC3C"></div><div class="t" style="left:382px;top:544px">0</div><div class="pin" style="left:383px;top:540px;width:7px;height:3px"></div><div class="pin" style="left:383px;top:558px;width:7px;height:3px"></div><div class="pin" style="left:398px;top:547px;width:3px;height:7px"></div>
<div class="a" style="left:672px;top:515px;width:34px;height:31px;background:#D2CA00;border-style:solid;border-width:3px;border-color:#FFFF28 #9E9800 #9E9800 #FFFF28"></div><div class="t" style="left:678px;top:523px">OK?</div><div class="pin" style="left:672px;top:527px;width:3px;height:7px"></div><div class="pin" style="left:686px;top:515px;width:7px;height:3px"></div><div class="pin" style="left:686px;top:543px;width:7px;height:3px"></div><div class="pin" style="left:703px;top:517px;width:3px;height:7px"></div><div class="pin" style="left:703px;top:537px;width:3px;height:7px"></div>
<div class="a" style="left:764px;top:540px;width:30px;height:21px;background:#0EC40E;border-style:solid;border-width:3px;border-color:#3CEC3C #089008 #089008 #3CEC3C"></div><div class="t" style="left:770px;top:544px">OK</div><div class="pin" style="left:776px;top:540px;width:7px;height:3px"></div><div class="pin" style="left:776px;top:558px;width:7px;height:3px"></div><div class="pin" style="left:791px;top:547px;width:3px;height:7px"></div>
<div class="a" style="left:691px;top:570px;width:117px;height:21px;background:#0EC40E;border-style:solid;border-width:3px;border-color:#3CEC3C #089008 #089008 #3CEC3C"></div><div class="t" style="left:700px;top:574px"><span style="letter-spacing:.2px">Fail:Bussreferens</span></div><div class="pin" style="left:746px;top:570px;width:7px;height:3px"></div><div class="pin" style="left:746px;top:588px;width:7px;height:3px"></div><div class="pin" style="left:805px;top:577px;width:3px;height:7px"></div>
<div class="a" style="left:853px;top:555px;width:32px;height:31px;background:#D2CA00;border-style:solid;border-width:3px;border-color:#FFFF28 #9E9800 #9E9800 #FFFF28"></div><div class="t" style="left:857px;top:563px">JCT</div><div class="pin" style="left:853px;top:557px;width:3px;height:7px"></div><div class="pin" style="left:853px;top:577px;width:3px;height:7px"></div><div class="pin" style="left:882px;top:567px;width:3px;height:7px"></div>
<div class="a" style="left:955px;top:511px;width:38px;height:18px;background:#ECE9D8;border:1px solid;border-color:#fff #ACA899 #ACA899 #fff"></div>
<div class="t" style="left:963px;top:512px;">Log</div>
<div class="a" style="left:952px;top:516px;width:3px;height:7px;background:#000"></div>
</body></html>
